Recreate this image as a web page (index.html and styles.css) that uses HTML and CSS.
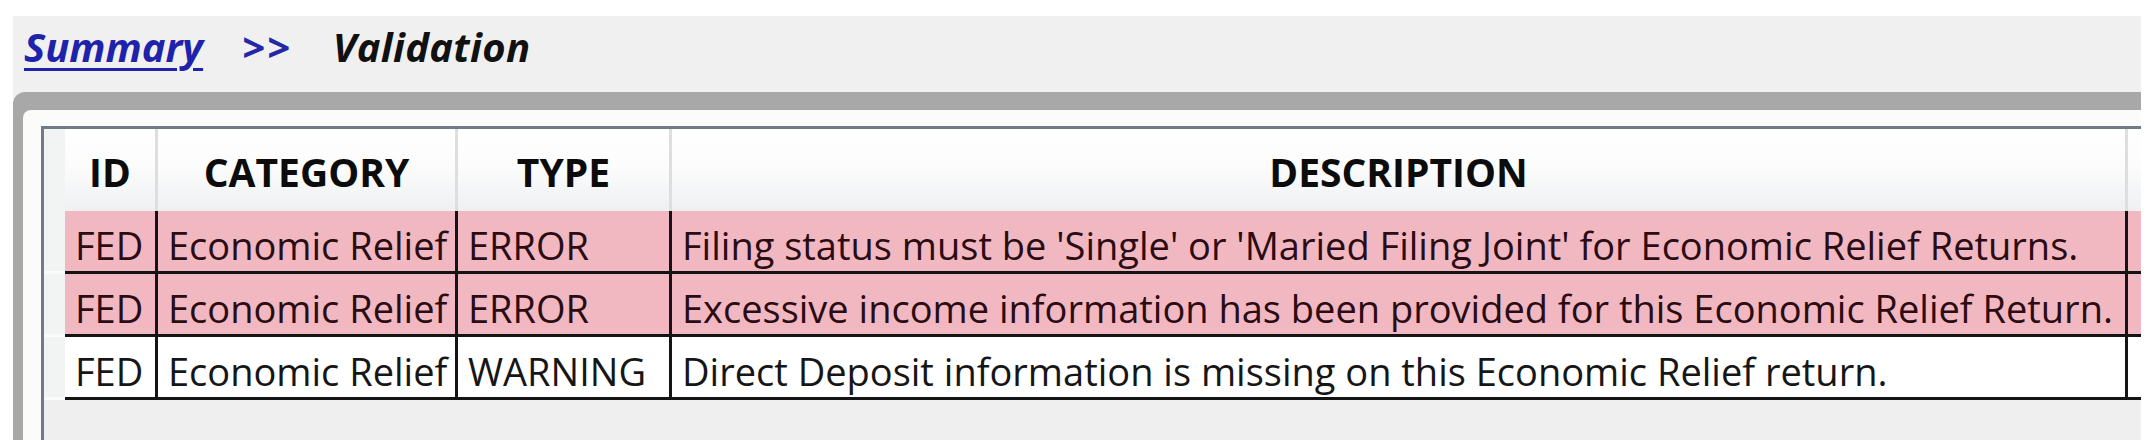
FILE: index.html
```html
<!DOCTYPE html>
<html lang="en">
<head>
<meta charset="utf-8">
<title>Validation</title>
<link rel="stylesheet" href="styles.css">
</head>
<body>
<div class="page">
  <nav class="crumbs">
    <a class="crumb-link" href="#">Summary</a>
    <span class="crumb-sep">&gt;&gt;</span>
    <span class="crumb-current">Validation</span>
  </nav>
  <div class="frame">
    <div class="panel">
      <div class="grid">
        <div class="row head">
          <div class="cell rh"></div>
          <div class="cell">ID</div>
          <div class="cell">CATEGORY</div>
          <div class="cell">TYPE</div>
          <div class="cell">DESCRIPTION</div>
          <div class="cell filler"></div>
        </div>
        <div class="row error">
          <div class="cell rh"></div>
          <div class="cell">FED</div>
          <div class="cell">Economic Relief</div>
          <div class="cell">ERROR</div>
          <div class="cell">Filing status must be 'Single' or 'Maried Filing Joint' for Economic Relief Returns.</div>
          <div class="cell filler"></div>
        </div>
        <div class="row error">
          <div class="cell rh"></div>
          <div class="cell">FED</div>
          <div class="cell">Economic Relief</div>
          <div class="cell">ERROR</div>
          <div class="cell">Excessive income information has been provided for this Economic Relief Return.</div>
          <div class="cell filler"></div>
        </div>
        <div class="row warning">
          <div class="cell rh"></div>
          <div class="cell">FED</div>
          <div class="cell">Economic Relief</div>
          <div class="cell">WARNING</div>
          <div class="cell">Direct Deposit information is missing on this Economic Relief return.</div>
          <div class="cell filler"></div>
        </div>
      </div>
    </div>
  </div>
</div>
</body>
</html>
```
FILE: styles.css
```css
* { box-sizing: border-box; }
html, body { margin: 0; padding: 0; background: #ffffff; }
body { font-family: "Open Sans", "Noto Sans", sans-serif; }

.page {
  margin: 16px 11px 0 13px;
  height: 424px;
  background: #f0f0f0;
  display: flex;
  flex-direction: column;
  overflow: hidden;
}

/* breadcrumb */
.crumbs {
  height: 76px;
  padding: 3px 0 0 11px;
  display: flex;
  align-items: flex-start;
  font-size: 40px;
  font-weight: 700;
  font-style: italic;
  line-height: 56px;
  white-space: nowrap;
}
.crumb-link {
  color: #1f22aa;
  text-decoration: underline;
  text-decoration-thickness: 3px;
  text-underline-offset: 6px;
}
.crumb-sep {
  color: #2328a8;
  margin-left: 39px;
  letter-spacing: 2px;
}
.crumb-current {
  color: #111111;
  margin-left: 41px;
  letter-spacing: 0.3px;
}

/* frame */
.frame {
  flex: 1;
  display: flex;
  flex-direction: column;
  background: #a8a8a8;
  padding: 18px 0 0 10px;
  border-top-left-radius: 12px;
}
.panel {
  flex: 1;
  display: flex;
  flex-direction: column;
  background: #fbfcfa;
  border-top-left-radius: 8px;
  padding: 16px 0 0 18px;
}
.grid {
  flex: 1;
  background: #efefef;
  border-top: 3px solid #6f7b88;
  border-left: 3px solid #6f7b88;
}

/* rows */
.row {
  display: grid;
  grid-template-columns: 21px 93px 300px 214px 1456px 1fr;
}
.cell {
  white-space: nowrap;
  overflow: hidden;
}

.head {
  height: 82px;
  background: linear-gradient(#ffffff 0%, #fcfcfc 45%, #eef0f2 100%);
}
.head .cell {
  padding-top: 3px;
  line-height: 79px;
  font-size: 39px;
  font-weight: 700;
  color: #0c0c0c;
  text-align: center;
  border-right: 3px solid #dedede;
}
.head .cell.rh { background: #fafafa; border-right: 2px solid #dcdcdc; }
.head .cell.filler { border-right: none; }

.error, .warning {
  height: 63px;
}
.error .cell, .warning .cell {
  height: 63px;
  padding: 8px 0 0 10px;
  line-height: 52px;
  font-size: 38px;
  border-right: 3px solid #141414;
  border-bottom: 3px solid #141414;
}
.error .cell { background: #f1b8c2; color: #2a0c12; }
.warning .cell { background: #ffffff; color: #161616; }
.row .cell.rh {
  background: #f2f3f3;
  border-right: none;
  border-bottom: 3px solid #fbfbfb;
  padding: 0;
}
.head .cell.rh { border-bottom: none; }
.row .cell.filler { border-right: none; padding: 0; }
```
